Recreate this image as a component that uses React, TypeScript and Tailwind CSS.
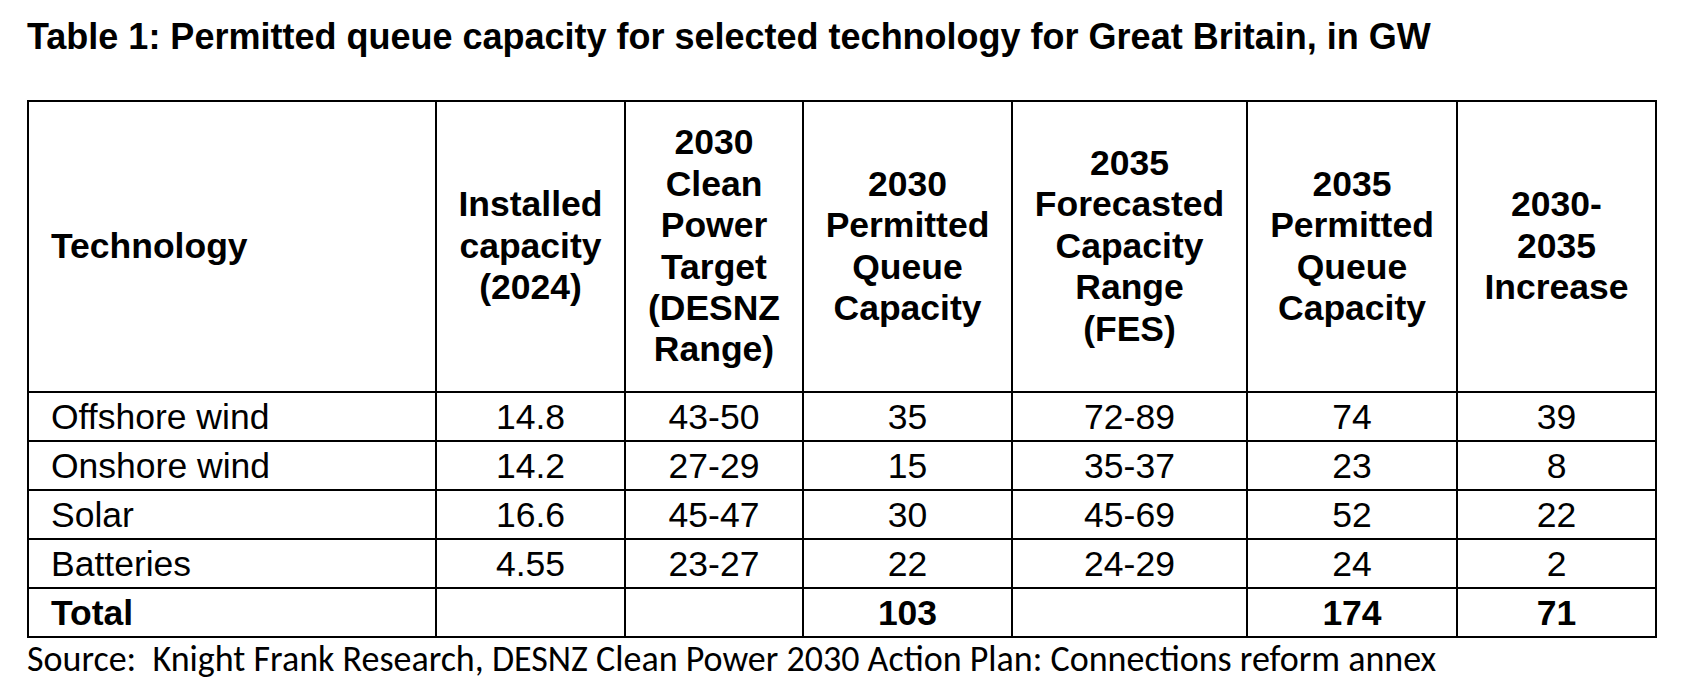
const header = [
  ["Installed", "capacity", "(2024)"],
  ["2030", "Clean", "Power", "Target", "(DESNZ", "Range)"],
  ["2030", "Permitted", "Queue", "Capacity"],
  ["2035", "Forecasted", "Capacity", "Range", "(FES)"],
  ["2035", "Permitted", "Queue", "Capacity"],
  ["2030-", "2035", "Increase"],
];

const rows = [
  ["Offshore wind", "14.8", "43-50", "35", "72-89", "74", "39"],
  ["Onshore wind", "14.2", "27-29", "15", "35-37", "23", "8"],
  ["Solar", "16.6", "45-47", "30", "45-69", "52", "22"],
  ["Batteries", "4.55", "23-27", "22", "24-29", "24", "2"],
];

const total = ["Total", "", "", "103", "", "174", "71"];

export default function App() {
  return (
    <div className="w-[1692px] h-[690px] bg-white text-black pl-[27px] font-['Liberation_Sans',Arial,sans-serif]">
      <h1 className="pt-[19px] text-[36px] leading-none font-bold whitespace-nowrap">
        Table 1: Permitted queue capacity for selected technology for Great Britain, in GW
      </h1>

      <table className="mt-[45px] table-fixed border-collapse border-2 border-black w-[1630px]">
        <colgroup>
          <col className="w-[408px]" />
          <col className="w-[189px]" />
          <col className="w-[178px]" />
          <col className="w-[209px]" />
          <col className="w-[235px]" />
          <col className="w-[210px]" />
          <col className="w-[199px]" />
        </colgroup>
        <thead>
          <tr className="h-[291px]">
            <th className="border-2 border-black text-left pl-[22px] text-[35.5px] leading-[41.4px] font-bold">
              Technology
            </th>
            {header.map((lines, i) => (
              <th key={i} className="border-2 border-black text-center text-[35.5px] leading-[41.4px] font-bold">
                {lines.map((l, j) => (
                  <div key={j}>{l}</div>
                ))}
              </th>
            ))}
          </tr>
        </thead>
        <tbody>
          {rows.map((r, i) => (
            <tr key={i} className="h-[49px]">
              {r.map((c, j) => (
                <td
                  key={j}
                  className={
                    j === 0
                      ? "border-2 border-black text-left pl-[22px] text-[35.5px] leading-[44px]"
                      : "border-2 border-black text-center text-[35.5px] leading-[44px]"
                  }
                >
                  {c}
                </td>
              ))}
            </tr>
          ))}
          <tr className="h-[49px]">
            {total.map((c, j) => (
              <td
                key={j}
                className={
                  j === 0
                    ? "border-2 border-black text-left pl-[22px] text-[35.5px] leading-[44px] font-bold"
                    : "border-2 border-black text-center text-[35.5px] leading-[44px] font-bold"
                }
              >
                {c}
              </td>
            ))}
          </tr>
        </tbody>
      </table>

      <p className="mt-[1px] whitespace-pre text-[36px] leading-[40px] font-['Carlito',Lato,sans-serif]">
        Source:  Knight Frank Research, DESNZ Clean Power 2030 Action Plan: Connections reform annex
      </p>
    </div>
  );
}
